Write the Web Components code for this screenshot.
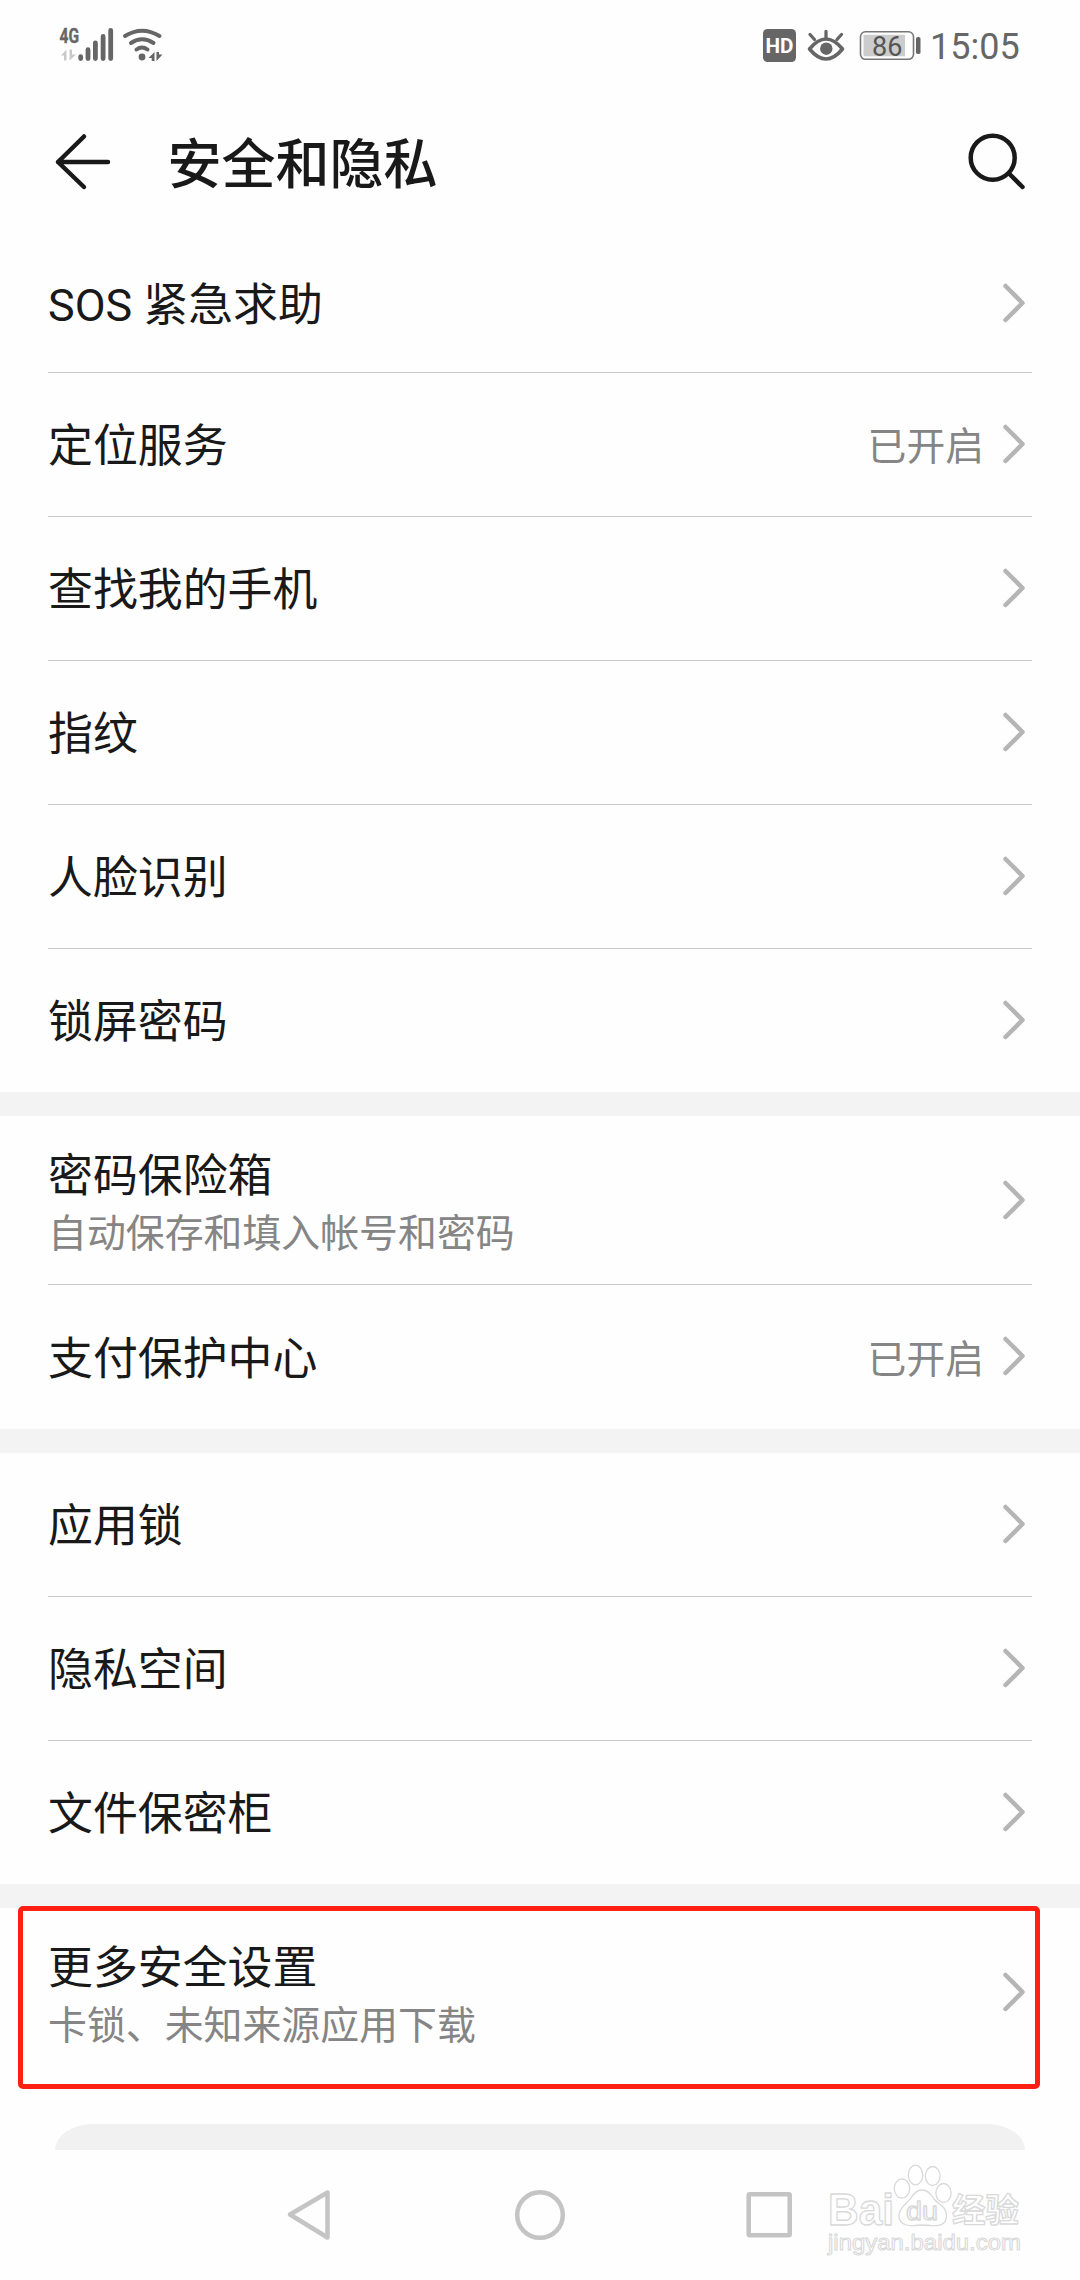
<!DOCTYPE html>
<html lang="zh-CN">
<head>
<meta charset="utf-8">
<title>安全和隐私</title>
<style>
  html {
    background: #fefefe;
  }

  body {
    margin: 0;
    width: 1080px;
    height: 2280px;
    overflow: hidden;
    font-family: Roboto, 'Noto Sans CJK SC', sans-serif;
    color: #191919;
  }
</style>
</head>
<body>
<settings-page>
  <status-bar slot="top" time="15:05" battery="86"></status-bar>
  <page-header slot="top">安全和隐私</page-header>

  <settings-group>
    <settings-item class="first">SOS 紧急求助</settings-item>
    <settings-item value="已开启">定位服务</settings-item>
    <settings-item>查找我的手机</settings-item>
    <settings-item>指纹</settings-item>
    <settings-item>人脸识别</settings-item>
    <settings-item>锁屏密码</settings-item>
  </settings-group>
  <settings-group>
    <settings-item note="自动保存和填入帐号和密码">密码保险箱</settings-item>
    <settings-item class="tall" value="已开启">支付保护中心</settings-item>
  </settings-group>
  <settings-group>
    <settings-item>应用锁</settings-item>
    <settings-item>隐私空间</settings-item>
    <settings-item>文件保密柜</settings-item>
  </settings-group>
  <settings-group>
    <settings-item note="卡锁、未知来源应用下载" marked>更多安全设置</settings-item>
  </settings-group>

  <nav-bar slot="bottom"></nav-bar>
</settings-page>

<script>
const define = (name, html, setup) => {
  const template = document.createElement('template');
  template.innerHTML = html;

  customElements.define(name, class extends HTMLElement {
    constructor() {
      super();
      const shadow = this.attachShadow({ mode: 'open' });
      shadow.appendChild(template.content.cloneNode(true));
    }

    connectedCallback() {
      if (setup) setup(this, this.shadowRoot);
    }
  });
};

define('settings-page', `
  <style>
  :host {
    display: flex;
    flex-direction: column;
    position: relative;
    width: 1080px;
    height: 2280px;
    overflow: hidden;
  }

  .groups {
    display: flex;
    flex-direction: column;
    gap: 24px;
    background: #f3f3f3;
  }

  .peek {
    height: 26px;
    margin: 48px 55px 0;
    background: #f1f1f1;
    border-radius: 38px 38px 0 0 / 26px 26px 0 0;
  }

  water-mark {
    position: absolute;
    left: 800px;
    top: 2150px;
  }
  </style>

  <slot name="top"></slot>
  <main class="groups"><slot></slot></main>
  <div class="peek"></div>
  <slot name="bottom"></slot>
  <water-mark></water-mark>
`);

define('status-bar', `
  <style>
  :host {
    display: flex;
    align-items: center;
    box-sizing: border-box;
    height: 92px;
    padding: 0 62px 0 50px;
    color: #666;
  }

  svg {
    display: block;
    flex: none;
  }

  .signal {
    margin-right: auto;
  }

  .time {
    width: 88px;
    margin-left: 8px;
    padding-top: 2px;
    font-size: 36px;
    line-height: 90px;
    white-space: nowrap;
  }
  </style>

  <svg class="signal" width="120" height="92" viewBox="50 0 120 92" fill="#666">
    <text x="59.500" y="43" font-size="21" font-weight="700" textLength="19.500" lengthAdjust="spacingAndGlyphs" stroke="#666" stroke-width=".4">4G</text>
    <path d="M66.500 60.500v-11l-5.500 6h3v5zM69.500 49.500v11l6.500-6h-4v-5z" fill="#c9c9c9"/>
    <g stroke="#666" stroke-width="4.800" stroke-linecap="round">
      <path d="M80.700 56.700v1.900M88 49.700v8.900M95.400 43v15.600M103.100 36.400v22.200M110.700 30.400v28.200"/>
    </g>
    <g fill="none" stroke="#666" stroke-width="4" stroke-linecap="round">
      <path d="M125 36Q142 25.500 159.500 36M131 43Q142 35.500 153.500 43M136.500 49.500Q142 45.500 147.500 49.500"/>
    </g>
    <circle cx="142" cy="57" r="3.400"/>
    <path d="M154.500 61v-9l-6 6h3.200v3zM156.500 52v9l6-6.500h-3.500v-2.500z"/>
  </svg>

  <svg width="160" height="92" viewBox="762 0 160 92" fill="#666">
    <rect x="763" y="29" width="33" height="33" rx="4.500"/>
    <text x="765.500" y="53" font-size="21" font-weight="700" fill="#fff" textLength="28" lengthAdjust="spacingAndGlyphs">HD</text>
    <path d="M809.500 49Q826 29 842.500 49Q826 69 809.500 49z" fill="none" stroke="#666" stroke-width="3.600" stroke-linejoin="round"/>
    <circle cx="826.300" cy="48.700" r="6.200"/>
    <path d="M826 31.500v6M810 34.500l4.500 5M841.500 34.500l-4.500 5" stroke="#666" stroke-width="3.300" stroke-linecap="round"/>
    <rect x="860.500" y="31.800" width="53" height="27.500" rx="5" fill="none" stroke="#777" stroke-width="1.600"/>
    <rect x="863.500" y="34.800" width="41.500" height="21.500" fill="#ccc"/>
    <rect x="916" y="37" width="4.500" height="17" rx="1.800"/>
    <text class="level" x="872" y="55.500" font-size="27" fill="#555"></text>
  </svg>
  <span class="time"></span>
`, (host, root) => {
  root.querySelector('.time').textContent = host.getAttribute('time');
  root.querySelector('.level').textContent = host.getAttribute('battery');
});

define('page-header', `
  <style>
  :host {
    display: flex;
    align-items: center;
    box-sizing: border-box;
    height: 142px;
    padding: 0 48px 0 50px;
  }

  h1 {
    flex: 1;
    margin: 0 0 0 51.500px;
    padding-top: 6px;
    font-size: 54px;
    line-height: 80px;
    font-weight: 500;
  }

  svg {
    display: block;
    fill: none;
    stroke: #191919;
    stroke-width: 4.500;
    stroke-linecap: round;
    stroke-linejoin: round;
  }
  </style>

  <svg width="66" height="142" viewBox="50 92 66 142">
    <path d="M84 136.500L58 162L84 187M58 162h50"/>
  </svg>
  <h1><slot></slot></h1>
  <svg width="66" height="142" viewBox="966 92 66 142">
    <circle cx="992.700" cy="157.700" r="22"/>
    <path d="M1009.500 174L1022.500 187"/>
  </svg>
`);

define('settings-group', `
  <style>
  :host {
    display: block;
    background: #fefefe;
  }

  ::slotted(:last-child) {
    --row: 143px;
    --line-width: 0px;
  }
  </style>
  <slot></slot>
`);

define('settings-item', `
  <style>
  :host {
    display: block;
    position: relative;
    padding: 0 48px;
  }

  .row {
    display: flex;
    align-items: center;
    box-sizing: border-box;
    height: var(--row, 144px);
    border-bottom: var(--line-width, 1px) solid #c8c8c8;
  }

  :host(.first) .row {
    height: 139px;
  }

  :host(.tall) .row {
    height: 144px;
  }

  :host([note]) .row {
    height: 169px;
  }

  :host([marked]) .row {
    height: 168px;
  }

  .text {
    flex: 1;
    padding-top: 5px;
  }

  :host([note]) .text {
    padding-top: 8px;
  }

  .title {
    font-size: 44.900px;
    line-height: 60px;
  }

  .note {
    font-size: 38.900px;
    line-height: 54px;
    color: #858585;
  }

  .value {
    margin-right: 18px;
    padding-bottom: 3px;
    font-size: 38.800px;
    color: #858585;
  }

  svg {
    display: block;
    margin: 0 6px 2px 0;
  }

  :host(.first) svg,
  :host([note]) svg {
    margin-bottom: 0;
  }

  .mark {
    display: none;
  }

  /* the box runs past the row on every side */
  :host([marked]) .mark {
    display: block;
    position: absolute;
    left: 18px;
    top: -2px;
    width: 1022px;
    height: 183px;
    box-sizing: border-box;
    border: 5px solid #ff2013;
    border-radius: 5px;
  }
  </style>

  <div class="row">
    <div class="text">
      <div class="title"><slot></slot></div>
    </div>
    <svg width="24" height="42" viewBox="0 0 24 42" fill="none" stroke="#b5b5b5" stroke-width="4.500" stroke-linecap="round" stroke-linejoin="round">
      <path d="M3.500 4L20.500 21L3.500 38"/>
    </svg>
  </div>
  <div class="mark"></div>
`, (host, root) => {
  if (host.hasAttribute('note')) {
    const note = document.createElement('div');
    note.className = 'note';
    note.textContent = host.getAttribute('note');
    root.querySelector('.text').appendChild(note);
  }

  if (host.hasAttribute('value')) {
    const value = document.createElement('span');
    value.className = 'value';
    value.textContent = host.getAttribute('value');
    root.querySelector('svg').before(value);
  }
});

define('nav-bar', `
  <style>
  :host {
    display: flex;
    justify-content: space-between;
    align-items: center;
    height: 130px;
    padding: 0 286px;
  }

  svg {
    display: block;
    fill: none;
    stroke: #c4c4c4;
    stroke-width: 4.500;
    stroke-linejoin: round;
  }
  </style>

  <svg width="50" height="54" viewBox="0 0 50 54">
    <path d="M4 26.500L41.500 4.500V49.500z"/>
  </svg>
  <svg width="54" height="54" viewBox="0 0 54 54">
    <circle cx="27" cy="27" r="22.800"/>
  </svg>
  <svg width="50" height="54" viewBox="0 0 50 54">
    <rect x="4.700" y="6.300" width="41" height="41" rx="1"/>
  </svg>
`);

define('water-mark', `
  <style>
  :host {
    display: block;
    width: 260px;
    height: 120px;
  }

  svg {
    display: block;
    fill: #fff;
    stroke: #d9d9d9;
    stroke-width: 1.300;
    stroke-linejoin: round;
  }
  </style>

  <svg width="260" height="120" viewBox="0 0 260 120">
    <text x="28" y="74.500" font-size="45" font-family="Liberation Sans, sans-serif" font-weight="700" textLength="66" lengthAdjust="spacingAndGlyphs">Bai</text>
    <ellipse cx="115.500" cy="25" rx="7.200" ry="9.800"/>
    <ellipse cx="132.700" cy="26" rx="7.400" ry="9.500"/>
    <ellipse cx="102" cy="38.500" rx="7.700" ry="9.700"/>
    <ellipse cx="143.500" cy="43" rx="7.600" ry="9.500"/>
    <path d="M122 40C127 40 131 44 134 49C138 54 147 57 146.500 66C146 76 138 76 131 75.500Q122 74.500 115 75.500C107 76.500 98.500 74 99 65C99.500 57 107 54 111 48C114 43 117 40 122 40z"/>
    <text x="106" y="69.500" font-size="25" font-family="Liberation Sans, sans-serif" textLength="32" lengthAdjust="spacingAndGlyphs">du</text>
    <text x="152" y="72" font-size="33.500" font-family="Noto Sans CJK SC, sans-serif" font-weight="700" textLength="67" lengthAdjust="spacingAndGlyphs">经验</text>
    <text x="28" y="99.500" font-size="22" font-family="Liberation Sans, sans-serif" textLength="193" lengthAdjust="spacingAndGlyphs" stroke-width="1">jingyan.baidu.com</text>
  </svg>
`);
</script>
</body>
</html>
